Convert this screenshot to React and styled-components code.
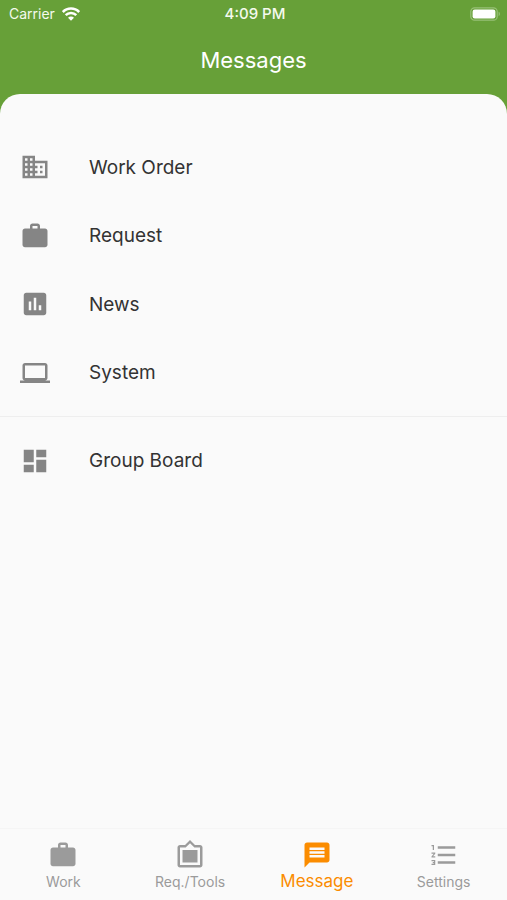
import React from "react";
import styled, { createGlobalStyle } from "styled-components";
import {
  MdAssessment,
  MdBusiness,
  MdComputer,
  MdDashboard,
  MdFilterFrames,
  MdFormatListNumbered,
  MdMessage,
  MdWork,
} from "react-icons/md";

const GlobalStyle = createGlobalStyle`
  *, *::before, *::after { box-sizing: border-box; }
  body {
    margin: 0;
    background: #fafafa;
    font-family: Inter, "Liberation Sans", sans-serif;
    -webkit-font-smoothing: antialiased;
  }
`;

const Screen = styled.div`
  display: flex;
  flex-direction: column;
  min-height: 100vh;
  background: #67a038;
`;

const StatusBar = styled.div`
  display: grid;
  grid-template-columns: 1fr auto 1fr;
  align-items: center;
  height: 28px;
  padding: 0 6px 0 9px;
  color: #f4faee;
  font-size: 14px;
  line-height: 20px;
`;

const Carrier = styled.span`
  display: flex;
  align-items: center;
  gap: 7px;
`;

const Clock = styled.time`
  font-size: 15px;
  font-weight: 500;
`;

const BatterySlot = styled.span`
  display: flex;
  justify-content: flex-end;
`;

const Header = styled.header`
  display: flex;
  justify-content: center;
  align-items: center;
  height: 66px;
  padding-bottom: 2px;
`;

const Title = styled.h1`
  margin: 0;
  color: #ffffff;
  font-size: 22px;
  font-weight: 400;
  line-height: 28px;
`;

const Panel = styled.main`
  flex: 1;
  padding-top: 39px;
  border-radius: 20px 20px 0 0;
  background: #fafafa;
`;

const MenuList = styled.ul`
  display: grid;
  grid-auto-rows: 1fr;
  min-height: ${({ $height }) => $height}px;
  margin: 0;
  padding: 0;
  list-style: none;
`;

const MenuRow = styled.button`
  display: flex;
  align-items: center;
  gap: 39px;
  width: 100%;
  height: 100%;
  padding: 0 20px;
  border: 0;
  background: transparent;
  color: #333333;
  font: inherit;
  font-size: 19px;
  line-height: 24px;
  text-align: left;
  cursor: pointer;

  svg {
    flex: none;
    width: 30px;
    height: 30px;
    color: #858585;
  }
`;

const MenuLabel = styled.span`
  padding-top: 1px;
`;

const Divider = styled.hr`
  height: 1px;
  margin: 9px 0;
  border: 0;
  background: #eeeeee;
`;

const TabBar = styled.nav`
  display: grid;
  grid-template-columns: repeat(4, 1fr);
  height: 72px;
  border-top: 1px solid #f5f5f5;
  background: #fafafa;
`;

const Tab = styled.button`
  display: flex;
  flex-direction: column;
  align-items: center;
  gap: 1px;
  padding: 11px 0 0;
  border: 0;
  background: transparent;
  color: ${({ $active }) => ($active ? "#fb8c00" : "#9b9b9b")};
  font: inherit;
  font-size: ${({ $active }) => ($active ? 17 : 14)}px;
  line-height: ${({ $active }) => ($active ? 20 : 22)}px;
  cursor: pointer;

  svg {
    flex: none;
    width: 30px;
    height: 30px;
  }
`;

function WifiIcon() {
  return (
    <svg width="18" height="14" viewBox="0 0 18 14" fill="none" aria-hidden="true">
      <path d="M.8 5C5.200.3 12.800.3 17.200 5" stroke="#fff" strokeWidth="2.700" />
      <path d="M3.700 8.200C6.600 5.200 11.400 5.200 14.300 8.200" stroke="#fff" strokeWidth="2.500" />
      <path d="M9 13.800 6 10.800C7.700 9.100 10.300 9.100 12 10.800Z" fill="#fff" />
    </svg>
  );
}

function BatteryIcon() {
  return (
    <svg width="31" height="14" viewBox="0 0 31 14" aria-hidden="true">
      <rect x="0.800" y="0.800" width="26.400" height="12.400" rx="3.800" fill="none" stroke="#98c077" strokeWidth="1.200" />
      <rect x="2.600" y="2.600" width="22.800" height="8.800" rx="2.200" fill="#fff" />
      <path d="M28.600 4.800c1.700.6 1.700 3.800 0 4.400z" fill="#98c077" />
    </svg>
  );
}

const messageItems = [
  { label: "Work Order", Icon: MdBusiness },
  { label: "Request", Icon: MdWork },
  { label: "News", Icon: MdAssessment },
  { label: "System", Icon: MdComputer },
];

const boardItems = [{ label: "Group Board", Icon: MdDashboard }];

const tabs = [
  { label: "Work", Icon: MdWork },
  { label: "Req./Tools", Icon: MdFilterFrames },
  { label: "Message", Icon: MdMessage, active: true },
  { label: "Settings", Icon: MdFormatListNumbered },
];

function Menu({ items, height }) {
  return (
    <MenuList $height={height}>
      {items.map(({ label, Icon }) => (
        <li key={label}>
          <MenuRow type="button">
            <Icon aria-hidden="true" />
            <MenuLabel>{label}</MenuLabel>
          </MenuRow>
        </li>
      ))}
    </MenuList>
  );
}

export default function App() {
  return (
    <Screen>
      <GlobalStyle />
      <StatusBar>
        <Carrier>
          Carrier
          <WifiIcon />
        </Carrier>
        <Clock>4:09 PM</Clock>
        <BatterySlot>
          <BatteryIcon />
        </BatterySlot>
      </StatusBar>
      <Header>
        <Title>Messages</Title>
      </Header>
      <Panel>
        <Menu items={messageItems} height={274} />
        <Divider />
        <Menu items={boardItems} height={69} />
      </Panel>
      <TabBar aria-label="Main">
        {tabs.map(({ label, Icon, active }) => (
          <Tab key={label} type="button" $active={active} aria-current={active ? "page" : undefined}>
            <Icon aria-hidden="true" />
            {label}
          </Tab>
        ))}
      </TabBar>
    </Screen>
  );
}
